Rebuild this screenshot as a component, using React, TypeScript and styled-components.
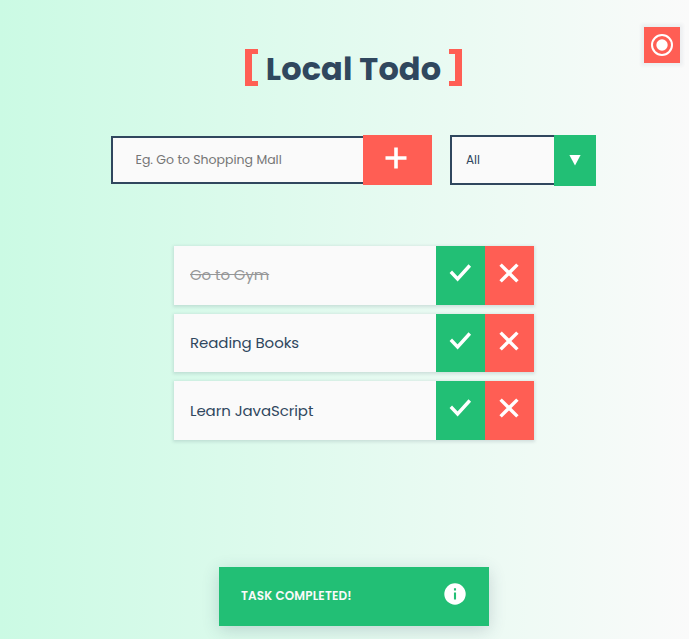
import React, { useState } from "react";
import styled, { createGlobalStyle } from "styled-components";

const navy = "#30475e";
const coral = "#ff5e54";
const green = "#22bf75";
const paper = "#fafafa";

const GlobalStyle = createGlobalStyle`
  * { box-sizing: border-box; }
  body {
    margin: 0;
    font-family: Poppins, Inter, "Open Sans", sans-serif;
    color: ${navy};
  }
  button, input { font: inherit; border: 0; border-radius: 0; padding: 0; }
`;

const Page = styled.div`
  position: relative;
  display: flex;
  flex-direction: column;
  align-items: center;
  height: 639px;
  padding: 47px 0 13px 19px;
  overflow: hidden;
  background: linear-gradient(to right, #cbfae4, ${paper});
`;

const ThemeButton = styled.button`
  position: absolute;
  top: 27px;
  right: 9px;
  width: 36px;
  height: 36px;
  display: grid;
  place-items: center;
  background: ${coral};
  box-shadow: 0 0 3px 3px rgba(48, 71, 94, 0.06);
`;

const Title = styled.h1`
  display: flex;
  align-items: flex-start;
  gap: 8px;
  height: 41px;
  margin: 0 1px 0 0;
  font-size: 32px;
  line-height: 43px;
  font-weight: 700;
  letter-spacing: 0.1px;
  white-space: nowrap;
`;

const Bracket = styled.span<{ $side: "left" | "right" }>`
  width: 13px;
  height: 37px;
  margin-top: 2px;
  border: solid ${coral};
  border-width: 5px;
  border-left-width: ${(p) => (p.$side === "left" ? 7 : 0)}px;
  border-right-width: ${(p) => (p.$side === "right" ? 7 : 0)}px;
`;

const Controls = styled.div`
  display: flex;
  align-items: flex-start;
  gap: 18px;
  width: 486px;
  height: 51px;
  margin-top: 47px;
`;

const Form = styled.form`
  display: flex;
  align-items: flex-start;
  width: 321px;
`;

const TaskInput = styled.input`
  width: 252px;
  height: 48px;
  margin-top: 1px;
  && {
    padding: 0 22.5px;
    border: 2px solid ${navy};
    border-right: 0;
    font-size: 12.5px;
  }
  background: ${paper};
  outline: 0;
  &::placeholder { color: #757575; opacity: 1; }
`;

const AddButton = styled.button`
  width: 69px;
  height: 50px;
  display: grid;
  place-items: center;
  && { padding: 0 3px 5px 0; }
  background: ${coral};
`;

const Select = styled.div`
  display: flex;
  width: 146px;
`;

const SelectValue = styled.div`
  width: 104px;
  height: 50px;
  padding-left: 14px;
  border: 2px solid ${navy};
  border-right: 0;
  background: ${paper};
  font-size: 12px;
  line-height: 46px;
`;

const SelectArrow = styled.div`
  width: 42px;
  height: 51px;
  display: grid;
  place-items: center;
  background: ${green};
`;

const List = styled.ul`
  display: grid;
  grid-template-rows: 59px 58px 59px;
  gap: 9px;
  width: 360px;
  margin: 60px 0 0;
  padding: 0;
  list-style: none;
`;

const Item = styled.li`
  display: flex;
  background: ${paper};
  box-shadow: 0 1px 3px 1px rgba(48, 71, 94, 0.14);
  &:last-child > span { line-height: 60px; }
`;

const ItemText = styled.span<{ $done: boolean }>`
  flex: 1;
  padding-left: 16px;
  font-size: 15px;
  line-height: 58px;
  letter-spacing: -0.08px;
  color: ${(p) => (p.$done ? "#969798" : navy)};
  text-decoration: ${(p) => (p.$done ? "line-through" : "none")};
  text-decoration-thickness: 1px;
`;

const ItemButton = styled.button<{ $color: string }>`
  width: 49px;
  display: grid;
  place-items: center;
  && { padding: 0 1px 5px 0; }
  background: ${(p) => p.$color};
`;

const Toast = styled.div`
  display: flex;
  align-items: center;
  justify-content: space-between;
  width: 270px;
  height: 59px;
  margin-top: auto;
  padding: 0 23px 2px 22px;
  background: ${green};
  color: ${paper};
  box-shadow: 0 4px 16px rgba(48, 71, 94, 0.2);
  font-size: 12px;
  font-weight: 600;
  letter-spacing: 0.15px;
`;

const InfoSlot = styled.span`
  display: flex;
  padding-bottom: 4px;
`;

const RadioIcon = () => (
  <svg width="24" height="24" viewBox="0 0 24 24">
    <circle cx="12" cy="12" r="10" fill="none" stroke="#fff" strokeWidth="2" />
    <circle cx="12" cy="12" r="5.7" fill="#fff" />
  </svg>
);

const PlusIcon = () => (
  <svg width="22" height="22" viewBox="0 0 22 22">
    <path d="M11 .5v21M.5 11h21" stroke="#fff" strokeWidth="3.6" />
  </svg>
);

const CheckIcon = () => (
  <svg width="24" height="20" viewBox="0 0 24 20">
    <path d="M2.8 8.8 9.6 15.9 21.8 2.5" fill="none" stroke="#fff" strokeWidth="3.4" />
  </svg>
);

const CrossIcon = () => (
  <svg width="20" height="20" viewBox="0 0 20 20">
    <path d="M1.6 1.6 18.4 18.4M18.4 1.6 1.6 18.4" stroke="#fff" strokeWidth="3.4" />
  </svg>
);

const ArrowIcon = () => (
  <svg width="12" height="11" viewBox="0 0 12 11">
    <path d="M.4 0h11.2L6 10.5z" fill="#fff" />
  </svg>
);

const InfoIcon = () => (
  <svg width="22" height="22" viewBox="0 0 22 22">
    <circle cx="11" cy="11" r="10.7" fill="#fff" />
    <path d="M11 5.2v2.3M11 9.5v7" stroke={green} strokeWidth="2.1" />
  </svg>
);

const initialTasks = [
  { text: "Go to Gym", done: true },
  { text: "Reading Books", done: false },
  { text: "Learn JavaScript", done: false },
];

export default function App() {
  const [tasks] = useState(initialTasks);

  return (
    <>
      <GlobalStyle />
      <Page>
        <ThemeButton aria-label="Change theme"><RadioIcon /></ThemeButton>
        <Title>
          <Bracket $side="left" />
          Local Todo
          <Bracket $side="right" />
        </Title>
        <Controls>
          <Form onSubmit={(e) => e.preventDefault()}>
            <TaskInput placeholder="Eg. Go to Shopping Mall" />
            <AddButton aria-label="Add task"><PlusIcon /></AddButton>
          </Form>
          <Select>
            <SelectValue>All</SelectValue>
            <SelectArrow><ArrowIcon /></SelectArrow>
          </Select>
        </Controls>
        <List>
          {tasks.map((task) => (
            <Item key={task.text}>
              <ItemText $done={task.done}>{task.text}</ItemText>
              <ItemButton $color={green} aria-label="Complete"><CheckIcon /></ItemButton>
              <ItemButton $color={coral} aria-label="Delete"><CrossIcon /></ItemButton>
            </Item>
          ))}
        </List>
        <Toast>
          TASK COMPLETED!
          <InfoSlot><InfoIcon /></InfoSlot>
        </Toast>
      </Page>
    </>
  );
}
